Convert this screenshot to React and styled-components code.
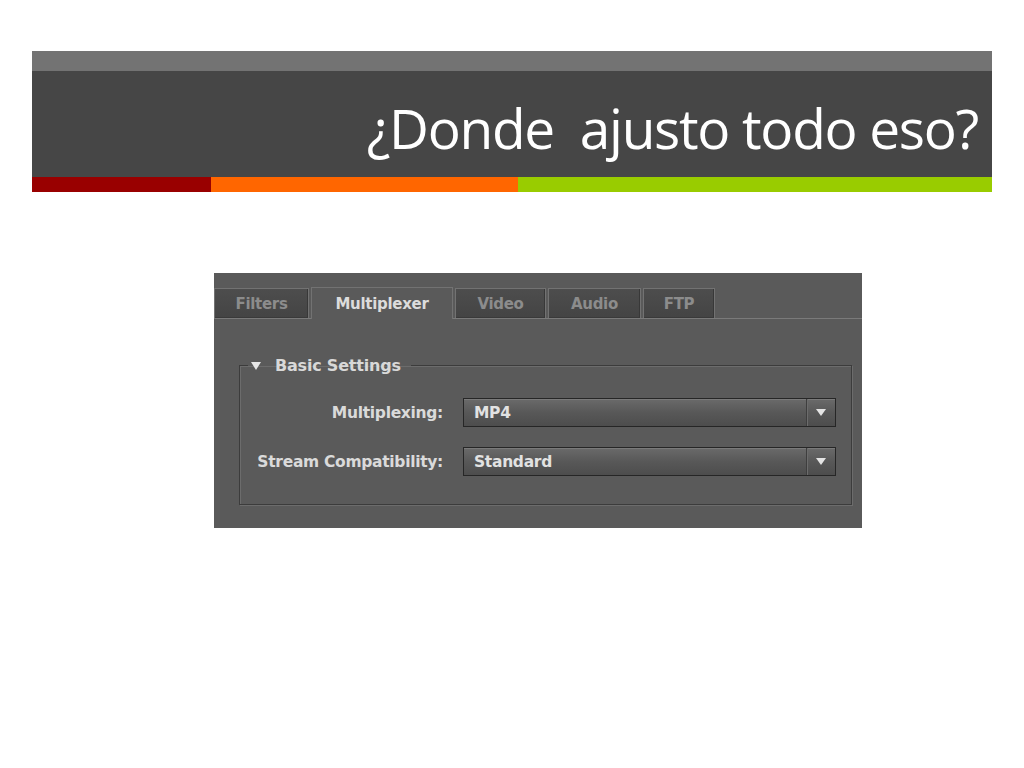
import React from 'react';
import styled, { createGlobalStyle } from 'styled-components';

const GlobalStyle = createGlobalStyle`
  html, body {
    margin: 0;
    padding: 0;
    background: #ffffff;
  }
  body {
    width: 1024px;
    height: 768px;
    overflow: hidden;
  }
`;

const Slide = styled.div`
  width: 1024px;
  height: 768px;
  padding-top: 51px;
  box-sizing: border-box;
`;

const Header = styled.header`
  width: 960px;
  margin: 0 auto;
`;

const TopBand = styled.div`
  height: 20px;
  background: #737373;
`;

const TitleBand = styled.div`
  height: 106px;
  background: #464646;
  display: flex;
  justify-content: flex-end;
  align-items: center;
  padding-right: 14px;
  padding-top: 6px;
  box-sizing: border-box;
`;

const Title = styled.h1`
  margin: 0;
  font-family: 'Open Sans', 'Liberation Sans', sans-serif;
  font-weight: 400;
  font-size: 55px;
  letter-spacing: -1.3px;
  color: #ffffff;
  white-space: pre;
`;

const Stripe = styled.div`
  height: 15px;
  display: grid;
  grid-template-columns: 179px 307px 1fr;
`;

const StripeCell = styled.div`
  background: ${({ color }) => color};
`;

const Panel = styled.div`
  width: 648px;
  height: 255px;
  margin: 81px 0 0 214px;
  background: #5a5a5a;
  font-family: 'DejaVu Sans', 'Liberation Sans', sans-serif;
  font-weight: bold;
  display: flex;
  flex-direction: column;
`;

const TabBar = styled.div`
  display: flex;
  align-items: flex-end;
  height: 46px;
  border-bottom: 1px solid #7a7a7a;
  box-sizing: border-box;
  gap: 2px;
`;

const Tab = styled.div`
  width: ${({ w }) => w}px;
  height: ${({ active }) => (active ? 32 : 30)}px;
  box-sizing: border-box;
  display: flex;
  align-items: center;
  justify-content: center;
  font-size: 15px;
  letter-spacing: -0.3px;
  color: ${({ active }) => (active ? '#dcdcdc' : '#8c8c8c')};
  background: ${({ active }) =>
    active ? '#5a5a5a' : 'linear-gradient(#4d4d4d, #444444)'};
  border: 1px solid #727272;
  border-bottom: none;
  box-shadow: ${({ active }) =>
    active ? 'none' : 'inset -1px 0 0 #383838, inset 0 -1px 0 #3a3a3a'};
  margin-bottom: ${({ active }) => (active ? '-1px' : '0')};
`;

const Body = styled.div`
  flex: 1;
  padding: 37px 10px 20px 25px;
  box-sizing: border-box;
`;

const Group = styled.fieldset`
  margin: 0;
  padding: 23px 15px 29px 0;
  border: 1px solid #3c3c3c;
  box-shadow: inset 1px 1px 0 #6c6c6c, 1px 1px 0 #6c6c6c;
  height: 149px;
  box-sizing: border-box;
  display: grid;
  grid-template-columns: 203px 373px;
  column-gap: 20px;
  row-gap: 20px;
  align-content: start;
`;

const Legend = styled.legend`
  margin-left: 8px;
  padding: 0 10px 0 3px;
  font-size: 16px;
  letter-spacing: -0.2px;
  color: #d8d8d8;
  display: flex;
  align-items: center;
  gap: 14px;
`;

const Caret = styled.span`
  display: inline-block;
  width: 0;
  height: 0;
  border-left: 5px solid transparent;
  border-right: 5px solid transparent;
  border-top: 8px solid #e6e6e6;
`;

const Label = styled.label`
  font-size: 15.5px;
  letter-spacing: -0.3px;
  color: #dadada;
  text-align: right;
  align-self: center;
  white-space: nowrap;
`;

const Select = styled.div`
  height: 29px;
  box-sizing: border-box;
  border: 1px solid #262626;
  background: linear-gradient(#6a6a6a, #585858 50%, #4d4d4d);
  box-shadow: inset 0 1px 0 #7a7a7a;
  display: flex;
  align-items: center;
  color: #e2e2e2;
  font-size: 15.5px;
  letter-spacing: -0.3px;
`;

const SelectValue = styled.span`
  flex: 1;
  padding-left: 10px;
`;

const SelectButton = styled.span`
  width: 28px;
  height: 100%;
  border-left: 1px solid #3e3e3e;
  box-shadow: inset 1px 0 0 #6c6c6c;
  display: flex;
  align-items: center;
  justify-content: center;
  &::after {
    content: '';
    border-left: 5px solid transparent;
    border-right: 5px solid transparent;
    border-top: 7px solid #e4e4e4;
  }
`;

const tabs = [
  { name: 'Filters', w: 95 },
  { name: 'Multiplexer', w: 142, active: true },
  { name: 'Video', w: 91 },
  { name: 'Audio', w: 93 },
  { name: 'FTP', w: 72 },
];

const rows = [
  { label: 'Multiplexing:', value: 'MP4' },
  { label: 'Stream Compatibility:', value: 'Standard' },
];

export default function App() {
  return (
    <Slide>
      <GlobalStyle />
      <Header>
        <TopBand />
        <TitleBand>
          <Title>{'¿Donde  ajusto todo eso?'}</Title>
        </TitleBand>
        <Stripe>
          <StripeCell color="#990000" />
          <StripeCell color="#ff6600" />
          <StripeCell color="#99cc00" />
        </Stripe>
      </Header>
      <Panel>
        <TabBar>
          {tabs.map(t => (
            <Tab key={t.name} w={t.w} active={t.active}>
              {t.name}
            </Tab>
          ))}
        </TabBar>
        <Body>
          <Group>
            <Legend>
              <Caret />
              Basic Settings
            </Legend>
            {rows.map(r => (
              <React.Fragment key={r.label}>
                <Label>{r.label}</Label>
                <Select>
                  <SelectValue>{r.value}</SelectValue>
                  <SelectButton />
                </Select>
              </React.Fragment>
            ))}
          </Group>
        </Body>
      </Panel>
    </Slide>
  );
}
